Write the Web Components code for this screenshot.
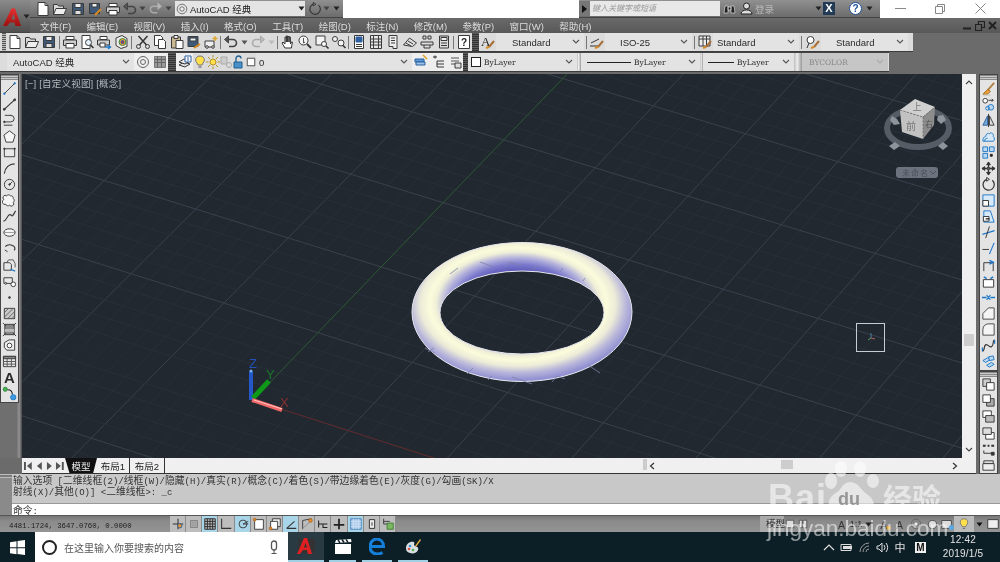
<!DOCTYPE html>
<html lang="zh">
<head>
<meta charset="utf-8">
<title>AutoCAD 经典</title>
<style>
  html, body { margin: 0; width: 1000px; height: 562px; overflow: hidden; background: #6b6b6b; }
  body { position: relative; font-family: "Liberation Sans", "Noto Sans CJK SC", sans-serif; font-size: 10px; display: flex; flex-direction: column; filter: blur(0.35px); }
</style>
</head>
<body>
<cad-header></cad-header>
<cad-toolrow row="1"></cad-toolrow>
<cad-toolrow row="2"></cad-toolrow>
<cad-workspace></cad-workspace>
<cad-tabs></cad-tabs>
<cad-command></cad-command>
<cad-status></cad-status>
<cad-taskbar></cad-taskbar>
<cad-watermark></cad-watermark>

<script>
// small drawing helpers for the 16x16 icons
const L = (d, c = "#3a3a3a", w = 1) => `<path d="${d}" fill="none" stroke="${c}" stroke-width="${w}"/>`;
const F = (d, f = "#fff", c = "#3a3a3a") => `<path d="${d}" fill="${f}" stroke="${c}"/>`;
const C = (x, y, r, f = "none", c = "#3a3a3a") => `<circle cx="${x}" cy="${y}" r="${r}" fill="${f}" stroke="${c}"/>`;
const B = "#1f78c8";
const brush = L("M9 13l5-6", "#a8703a", 2) + L("M6 14l3-1", "#d88a20", 2);

const ICONS = {
  new: F("M3 1.5h7l3 3v10H3z") + L("M10 1.5v3h3"),
  open: F("M1.5 13.5v-10h4l1 1.500h5v2", "#d8d8d8") + F("M1.500 13.500l2.500-6h10.500l-2.500 6z", "#eee"),
  save: F("M2.500 2.500h11v11h-11z", "#3f5a78") + F("M5 2.500h6v4H5z", "#eee") + F("M5 9.500h6v4H5z", "#ddd"),
  saveas: F("M2.500 2.500h10v10h-10z", "#3f5a78") + F("M5 2.500h5v3.500H5z", "#eee") + L("M8 14l6-6", "#d88a20", 2),
  plot: F("M4 2.500h8v3H4z") + F("M1.500 6h13v5.500h-13z", "#ccc") + F("M4 9.500h8v4.500H4z"),
  preview: F("M3 1.500h8v13H3z") + C(9.5, 8.5, 3, "#e8f2fa") + L("M11.500 11l3 3", "#333", 1.6),
  publish: F("M4 2.500h7v3H4z") + F("M1.500 6h12v5h-12z", "#ccc") + F("M4 9h5v4H4z") + L("M9 13h5M12 11l2.500 2-2.500 2", B, 1.4),
  view3d: F("M3 4l6-2.500 5 3v8l-6 2-5-3z", "#eee") + C(9.5, 8, 3.500, "#f2a020", "#3a8a50") + C(9.5, 8, 1.5, "#c03030", "#2060c0"),
  cut: L("M3.500 2l8 9M12.500 2l-8 9", "#333", 1.5) + C(3.5, 12.5, 2) + C(12.5, 12.5, 2),
  copy: F("M2.500 1.500h6l2 2v8h-8z") + F("M6.500 5.500h5l2 2v7h-7z"),
  paste: F("M2.500 3h9v11h-9z", "#c9b890") + F("M5 1.500h4v3H5z", "#eee") + F("M7 6.500h7v8H7z"),
  match: F("M2 2.500h10v10H2z", "#3f5a78") + F("M4 4h6v3H4z", "#eee") + L("M8 14l6-4", "#d88a20", 2),
  block: F("M2 7h9v6H2z", "#eee") + C(4, 13, 1.3, "#fff") + C(10, 13, 1.3, "#fff") + L("M12 2v5M9.500 4.500h5", "#e0a020", 1.3),
  undo: L("M4 5.500h6a3.500 3.500 0 010 7H6", "#444", 1.6) + F("M1.500 5.500l4-3.500v7z", "#555", "#444"),
  redo: L("M12 5.500H6a3.500 3.500 0 000 7h4", "#aaa", 1.6) + F("M14.500 5.500l-4-3.500v7z", "#bbb", "#aaa"),
  pan: F("M5 14l-3-5 1-1 2 2V3h1.300v5-6h1.400v6-5.500h1.400V8V3h1.300v7l1-2h1l-1 6z", "#fff", "#333"),
  zoomr: C(6.5, 6.5, 4.5, "#f4f4f4") + L("M10 10l4 4", "#333", 1.8) + L("M6.500 4v5M8 8l-1.500 1", "#555"),
  zoomw: F("M2 2h9v9H2z", "#f4f4f4") + C(10, 10, 2.5, "#fff") + L("M12 12l2.500 2.500", "#333", 1.6),
  zoomp: C(4, 5, 2.5, "#f4f4f4") + C(10, 9, 3, "#f4f4f4") + L("M12 11.500l2.500 2.500", "#333", 1.6),
  props: F("M3.500 1.500h9v13h-9z") + F("M5 3h6v5H5z", "#2f5f9f", "#2f5f9f") + L("M5 10.500h6M5 12.500h6"),
  design: F("M2.500 1.500h11v13h-11z", "#e8e8e8") + L("M5.500 1.500v13M10.500 1.500v13M2.500 5h11M2.500 8h11M2.500 11h11"),
  palette: F("M4 1.500h8v13H8v-2H4z", "#eee") + L("M6 4h4M6 6.500h4M6 9h4"),
  sheet: F("M1.500 11l6-7 7 5-4 3.500z", "#ddd") + L("M4 9l5 3M6 7l5 3"),
  markup: L("M4 2h3v3H4zM9 2h3v3H9zM2 8h12v3H2z") + L("M5 11v3h6v-3"),
  calc: F("M3.500 2h9v12h-9z", "#ddd") + F("M5 3.500h6v3H5z", "#eee") + L("M5 9h6M5 11.500h6"),
  help: F("M2.500 1.500h11v13h-11z", "#fff") + `<text x="8" y="12" font-size="10" font-weight="bold" text-anchor="middle" fill="#222" font-family="Liberation Sans">?</text>`,
  textst: `<text x="1" y="12" font-size="13" fill="#222" font-family="Liberation Serif">A</text>` + brush,
  dimst: L("M1 12h9M2 9l8-4", "#333") + brush,
  tablest: F("M2 2h11v10H2z", "#eee") + L("M2 5h11M6 2v10M9.500 2v10") + brush,
  mlst: C(5.5, 6, 3.5, "#fff") + L("M4 9l-2 5", "#333") + brush,
  gear: C(8, 8, 2.5, "#eee", "#666") + C(8, 8, 5.5, "none", "#666"),
  wsgrid: F("M2.500 2.500h11v11h-11z", "#999", "#777") + L("M2.500 5.500h11M2.500 8.500h11M5.500 2.500v11M9.500 2.500v11", "#666"),
  layers: F("M2 11l5-3 6 2-5 3z", "#ddd") + F("M2 8l5-3 6 2-5 3z", "#eee") + F("M8 2h6v6H8z", "#fff", "#2f5f9f") + L("M10 4h2M10 6h2", "#2f5f9f"),
  bulb: F("M8 2a4 4 0 013 7l-1 2H6L5 9a4 4 0 013-7z", "#ffe04a", "#777") + L("M6.500 13h3", "#777", 1.4),
  sun: C(8, 8, 3, "#ffe04a", "#b89020") + L("M8 1v2.500M8 12.500V15M1 8h2.500M12.500 8H15M3 3l2 2M11 11l2 2M13 3l-2 2M5 11l-2 2", "#b89020"),
  vpfrz: F("M3 3h6v7H3z", "#ccc", "#aaa") + C(11, 11, 2.5, "#ddd", "#aaa"),
  lock: F("M3 8h8v6H3z", "#4a90c8", "#1f5f8f") + L("M5 8V4.500a2.500 2.500 0 015 0", "#1f5f8f", 1.3),
  sq: F("M3 3h10v10H3z", "#fff", "#222"),
  laymatch: F("M2 5h9v3H2z", "#5c9bd8", "#2f5f9f") + F("M3 8h9v3H3z", "#9cc4ea", "#2f5f9f") + L("M10 1l4 4", "#e0a020", 1.6),
  layprev: L("M3 3h4M5 1.500v3", "#333") + L("M7 7h7M7 10h7M7 13h7") + L("M7 7v6", "#333"),
  laystate: L("M4 4h8M4 7h8M4 10h8", "#555") + F("M8 9h6v5H8z", "#ddd"),
  line: L("M2.500 13.500L13.500 2.500") + C(2.5, 13.5, .8, "#1c6fc0", "#1c6fc0") + C(13.5, 2.5, .8, "#1c6fc0", "#1c6fc0"),
  xline: L("M1.500 14L14.500 2", "#333", 1.2) + C(2.5, 13, 1, "#333") + C(13.5, 3, 1, "#333"),
  pline: L("M10 2.500h-7M9 2.500a4 3.500 0 010 7H2") + L("M2 13h9", "#333") + C(2.5, 9.5, .8, "#333"),
  poly: F("M8 2l6 4.500-2.300 7.500H4.300L2 6.500z", "#f6f6f6"),
  rect: F("M2.500 4h11v8.500h-11z", "#e8e8e8") + C(2.5, 4, .7, "#333") + C(13.5, 4, .7, "#333"),
  arc: L("M2.500 13.500C3 7 8 3 13.500 3", "#333", 1.2),
  circle: C(8, 8, 5.5) + L("M8 8l3-3", "#333") + C(8, 8, .8, "#333"),
  cloud: F("M5 3a2.500 2.500 0 014 0 2.500 2.500 0 013 3 2.500 2.500 0 010 4 2.500 2.500 0 01-4 3 2.500 2.500 0 01-4-1 2.500 2.500 0 01-2-5 2.500 2.500 0 013-4z", "#f6f6f6"),
  spline: L("M1.500 13c4-1 4-7 7-7s1 5 6-4", "#333", 1.1),
  ellipse: `<ellipse cx="8" cy="8" rx="6" ry="4" fill="#f6f6f6" stroke="#333"/>` + L("M2 8h12M8 4v1", "#999"),
  earc: L("M3.500 6A5.500 3.800 0 1113 10", "#333", 1.2) + L("M3 9.500l3 2", "#333"),
  insert: F("M2 5h6l2 2v6H2z", "#e8e8e8") + L("M5 5l2-3h5l2 4v4", "#555") + L("M9 12l5 2", B, 1.4),
  wblock: F("M2 4h9v6H2z", "#e8e8e8") + C(12, 11, 2.5, "#fff") + C(4, 10, 1, "#fff"),
  point: C(8, 8, 1, "#444", "#444"),
  hatch: F("M2.500 2.500h11v11h-11z", "#c8c8c8") + L("M2.500 7l4.500-4.500M2.500 12l9.500-9.500M6 13.500l7.500-7.500M10.500 13.500l3-3", "#666"),
  grad: F("M3 2.500h10v11H3z", "#888") + L("M1 1l3 3M15 1l-3 3M1 15l3-3M15 15l-3-3") + L("M3 9h10", "#bbb", 3),
  region: F("M2.500 5l5-3h6v11H5l-2.500-3z", "#eee") + C(8, 8, 2.5, "#fff"),
  table: F("M1.500 2.500h13v11h-13z", "#e8e8e8") + F("M1.500 2.500h13v2.500h-13z", "#888") + L("M1.500 8h13M1.500 10.800h13M5.500 5v8.500M10 5v8.500", "#555"),
  mtext: `<text x="8" y="14" font-size="16" font-weight="bold" text-anchor="middle" fill="#2a2a2a" font-family="Liberation Sans">A</text>`,
  addsel: C(3.5, 3.5, 2.2, "#4caf50", "#2e8b40") + L("M6 4c4 0 5 2 5 5", "#222", 1.2) + C(12, 12, 2.8, "#3d9ce0", "#1f78c8"),
  erase: L("M14 2L7 10", "#b08040", 2) + F("M7 9l-5 5h5l3-3z", "#e8a040", "#a86a20") + L("M2 15h8", "#c0c0c0"),
  copyobj: C(4.5, 4, 2.500, "#fff") + L("M8 3.500h5l-1.500-1.500M13 3.500l-1.500 1.500", "#333") + C(10.5, 11, 3, "#bcd8f0", B) + C(7, 12, 2, "none", B),
  mirror: F("M7 3v10H2z", "#7aa8d8", "#2f5f9f") + F("M9 3v10h5z", "#ddd") + L("M8 1v14", "#333"),
  offset: F("M2 13c0-4 2-5 3-5 0-3 3-4 4-3 2-2 5 0 4 3 2 1 1.500 5 0 5z", "#d8eaf8", B) + L("M4 13c0-3 1-3 3-3", B),
  array: F("M2 2h5v5H2zM9 2h5v5H9zM2 9h5v5H2z", "#bcd8f0", B) + F("M10 10h2v2h-2z", "#222", "#222"),
  move: L("M8 1.500v13M1.500 8h13", "#333", 1.4) + F("M8 1l2 3H6zM8 15l2-3H6zM1 8l3-2v4zM15 8l-3-2v4z", "#333", "#333") + C(8, 8, 1.5, "#666", "#333"),
  rotate: L("M12 3.500A6 6 0 116 2.500", "#333", 1.3) + L("M6 .5v4l3-2z", "#333"),
  scale: F("M2 2h12v12H2z", "#d8eaf8", B) + F("M2 8h6v6H2z", "#fff", "#333"),
  stretch: F("M3 2h7l4 12H3z", "#d8eaf8", B) + F("M2.500 8h6v5h-6z", "#fff", "#333") + L("M5 10.500h4", "#222", 1.4),
  trim: L("M1.500 10l13-4", B, 1.2) + L("M9 1.500L5 14", "#333"),
  extend: L("M1.500 9h7", "#333", 1) + L("M9 14l5-12", B, 1.2),
  brk: L("M3 5h10v9", "#333") + L("M3 5v9", "#333") + L("M9 2.500l4 2-4 2", B, 1.6),
  brk2: F("M2.500 6h11v8h-11z", "#fff", "#333") + L("M3 3l3 2M13 3l-3 2", B, 1.6),
  join: L("M1 8h5M10 8h5", B, 1.4) + L("M6 5.500l2 2.500-2 2.500M10 5.500l-2 2.500 2 2.500", B, 1.2),
  chamfer: F("M2 14V8l6-6h6v12z", "#f4f4f4", "#444"),
  fillet: F("M2 14V8C2 4 5 2 8 2h6v12z", "#f4f4f4", "#444"),
  blend: L("M1.500 14c3 0 1-7 4-7s3 4 6 2 0-6 3-7", "#333", 1.2) + L("M1.500 10v4M14.500 2v4", B, 1.4),
  explode: F("M2 7l5-3 3 2-5 3z", "#bcd8f0", B) + F("M6 12l5-3 3 2-5 3z", "#bcd8f0", B) + F("M8 3l5-1 1 4-5 1z", "#bcd8f0", B),
  front: F("M2 2h8v8H2z", "#ccc") + F("M6 6h8v8H6z", "#fff"),
  back: F("M6 6h8v8H6z", "#aaa") + F("M2 2h8v8H2z", "#fff"),
  above: F("M2 2h9v7H2z", "#fff") + F("M5 7h9v7H5z", "#bbb"),
  below: F("M5 7h9v7H5z", "#fff") + F("M2 2h9v7H2z", "#ddd"),
  attr: L("M2 4h3M7 4h2M11 4h3", "#333", 2) + L("M3 9v3h9", "#333") + F("M11 11h3v3h-3z", "#333", "#333"),
  m: F("M3 3h10v3H3z", "#ddd") + F("M2 6h12v7H2z", "#eee"),
};

class CadIcon extends HTMLElement {
  connectedCallback() {
    const size = this.getAttribute("size") || 16;
    this.attachShadow({ mode: "open" }).innerHTML = `
      <style>:host { display: flex; align-items: center; justify-content: center; flex: none; } svg { display: block; }</style>
      <svg width="${size}" height="${size}" viewBox="0 0 16 16">${ICONS[this.getAttribute("name")] || ""}</svg>`;
  }
}
customElements.define("cad-icon", CadIcon);

const icon = (n, s) => `<cad-icon name="${n}"${s ? ` size="${s}"` : ""}></cad-icon>`;
const arrow = (c = "#444") => `<svg width="8" height="6" viewBox="0 0 8 6"><path d="M1 1l3 3 3-3" fill="none" stroke="${c}" stroke-width="1.100"/></svg>`;
const tri = (c = "#333") => `<svg width="7" height="5" viewBox="0 0 7 5"><path d="M0.500 .5h6L3.500 4.500z" fill="${c}"/></svg>`;

/* the logo and the two dark rows on top */
class CadHeader extends HTMLElement {
  connectedCallback() {
    const menus = ["文件(F)", "编辑(E)", "视图(V)", "插入(I)", "格式(O)", "工具(T)", "绘图(D)", "标注(N)", "修改(M)", "参数(P)", "窗口(W)", "帮助(H)"];
    const quick = ["new", "open", "save", "saveas", "plot"];
    this.attachShadow({ mode: "open" }).innerHTML = `
      <style>
        :host { display: flex; height: 33px; flex: none; background: #5e5e5e; color: #e6e6e6; }
        .logo { width: 30px; flex: none; display: flex; align-items: center; gap: 1px; padding-left: 2px; box-sizing: border-box; background: linear-gradient(#8a8a8a, #4e4e4e); }
        .col { flex: 1; min-width: 0; display: flex; flex-direction: column; }
        .title { height: 18px; display: flex; align-items: center; flex: none; background: linear-gradient(#909090, #6c6c6c); border-bottom: 1px solid #444; box-sizing: border-box; }
        .quick { display: flex; width: 145px; padding-left: 4px; box-sizing: border-box; align-items: center; }
        .quick cad-icon { width: 17.500px; }
        .combo { width: 130px; height: 15px; background: #e4e4e4; display: flex; align-items: center; color: #222; font-size: 9.500px; box-sizing: border-box; flex: none; }
        .combo span { flex: 1; padding-left: 1px; }
        .blank { background: #fff; height: 18px; flex: none; }
        .search { width: 130px; height: 15px; background: #e8e8e8; color: #999; font-size: 8px; font-style: italic; line-height: 15px; padding-left: 2px; box-sizing: border-box; flex: none; }
        .pick { width: 11px; height: 15px; background: #777; display: flex; align-items: center; justify-content: center; flex: none; }
        .right { flex: 1; display: flex; align-items: center; height: 17px; }
        .win { width: 120px; height: 18px; background: #fff; display: flex; flex: none; color: #888; }
        .win div { flex: 1; display: flex; align-items: center; justify-content: center; }
        .menu { flex: 1; display: flex; align-items: center; padding-left: 10px; gap: 15.400px; font-size: 9.500px; background: linear-gradient(#6a6a6a, #585858); position: relative; color: #dcdcdc; }
        .mdi { margin-left: auto; display: flex; gap: 3px; padding-right: 3px; align-items: center; }
      </style>
      <div class="logo">
        <svg width="20" height="20" viewBox="0 0 20 20"><defs><linearGradient id="r" x1="0" y1="0" x2="0" y2="1"><stop offset="0" stop-color="#e83030"/><stop offset="1" stop-color="#9a1010"/></linearGradient></defs><path fill-rule="evenodd" d="M1 19L9.500 1.500h3.500L19 19h-5.500l-1-3.500H8L5 19zM11.500 7L9.500 12.500h3.500z" fill="url(#r)"/></svg>
        ${tri("#222")}
      </div>
      <div class="col">
        <div class="title">
          <div class="quick">${quick.map((n) => icon(n)).join("")}${icon("undo")}<span style="width:8px;display:flex">${tri("#444")}</span>${icon("redo", 15)}<span style="display:flex">${tri("#444")}</span></div>
          <div class="combo">${icon("gear", 14)}<span>AutoCAD 经典</span>${tri("#222")}</div>
          <span style="width:3px"></span>${icon("rotate", 14)}<span style="display:flex;margin:0 3px 0 1px">${tri("#444")}</span>
          <span style="display:flex;margin-right:3px">${tri("#222")}</span>
          <div class="blank" style="width:236px"></div>
          <div class="pick">${`<svg width="5" height="8" viewBox="0 0 5 8"><path d="M0 0l5 4-5 4z" fill="#111"/></svg>`}</div>
          <div class="search">键入关键字或短语</div>
          <div class="right">
            <span style="width:17px;margin-left:1px;display:flex;justify-content:center"><svg width="13" height="12" viewBox="0 0 13 12"><path d="M1 10l1-7h3v7zM8 10V3h3l1 7zM5 4h3v3H5z" fill="#222" stroke="#eee" stroke-width=".6"/></svg></span>
            <span style="width:17px;display:flex;justify-content:center"><svg width="13" height="13" viewBox="0 0 13 13"><circle cx="6.500" cy="4" r="3" fill="#ddd" stroke="#222"/><path d="M1 12c0-3 3-4 5.500-4S12 9 12 12z" fill="#ddd" stroke="#222"/></svg></span>
            <span style="color:#bbb;font-size:9.500px;width:60px">登录</span>
            <span style="display:flex;width:8px">${tri("#222")}</span>
            <span style="width:12px;height:13px;background:#223a55;color:#fff;font-size:11px;font-weight:bold;text-align:center;line-height:13px;margin-right:14px">X</span>
            <span style="width:13px;height:13px;border-radius:50%;background:#fff;color:#1c4f9c;border:1px solid #1c4f9c;box-sizing:border-box;font-size:10px;font-weight:bold;text-align:center;line-height:11px;margin-right:4px">?</span>
            <span style="display:flex">${tri("#222")}</span>
          </div>
          <div class="win">
            <div><svg width="11" height="1"><path d="M0 .5h11" stroke="#888"/></svg></div>
            <div><svg width="10" height="10"><path d="M.5 2.500h7v7h-7zM2.500 2.500v-2h7v7h-2" fill="none" stroke="#888"/></svg></div>
            <div><svg width="11" height="11"><path d="M.5 .5l10 10M10.500 .5l-10 10" stroke="#888"/></svg></div>
          </div>
        </div>
        <div class="menu">
          ${menus.map((m) => `<span>${m}</span>`).join("")}
          <div class="mdi">
            <svg width="9" height="9"><path d="M0 7.500h8" stroke="#222" stroke-width="2"/></svg>
            <svg width="10" height="10"><path d="M.5 3.500h6v6h-6zM3.500 3v-2.500h6v6H7" fill="none" stroke="#222" stroke-width="1.200"/></svg>
            <svg width="9" height="9"><path d="M1 1l7 7M8 1L1 8" stroke="#222" stroke-width="2"/></svg>
          </div>
        </div>
      </div>`;
  }
}
customElements.define("cad-header", CadHeader);

const ROWS = {
  1: [
    { pad: 2 }, { grip: 4, x: 0 },
    "new", "open", "save", { sep: 4 }, "plot", "preview", "publish", "view3d", { sep: 5 },
    "cut", "copy", "paste", "match", "block", { sep: 3 },
    "undo", { tri: 10 }, "redo", { tri: 10, light: 1 }, { sep: 3 },
    "pan", "zoomr", "zoomw", "zoomp", { sep: 3 },
    "props", "design", "palette", "sheet", "markup", "calc", { sep: 3 }, "help",
    { gap: 7 },
    "textst", { combo: "Standard", w: 88, pl: 16 }, { sep: 4 },
    "dimst", { combo: "ISO-25", w: 87, pl: 15 }, { sep: 4 },
    "tablest", { combo: "Standard", w: 86, pl: 4 }, { sep: 5 },
    "mlst", { combo: "Standard", w: 87, pl: 15, end: 1 },
  ],
  2: [
    { pad: 7 },
    { combo: "AutoCAD 经典", w: 127, pl: 6 }, { ic: "gear", bg: 1 }, { ic: "wsgrid", bg: 1 },
    { gap: 8 },
    { ic: "layers", bg: 1 }, { ic: "bulb", w: 14 }, { ic: "sun", w: 12 }, { ic: "vpfrz", w: 14 }, { ic: "lock", w: 12 }, { ic: "sq", w: 11, s: 12 },
    { combo: "0", w: 156, pl: 3, ph: 1 },
    { ic: "laymatch", bg: 1 }, { ic: "layprev", bg: 1 }, { ic: "laystate", bg: 1 },
    { gap: 5 },
    { combo: "ByLayer", w: 109, serif: 1, swatch: 1 }, { gap: 4, thin: 1 },
    { combo: "ByLayer", w: 119, serif: 1, ln: 44, pl: 6 }, { gap: 3, thin: 1 },
    { combo: "ByLayer", w: 91, serif: 1, ln: 26, pl: 5 }, { gap: 8, thin: 1 },
    { combo: "BYCOLOR", w: 86, serif: 1, off: 1, pl: 7, end: 1 },
  ],
};

class CadToolrow extends HTMLElement {
  connectedCallback() {
    const row = this.getAttribute("row");
    const cells = ROWS[row].map((it) => {
      if (typeof it === "string") return `<div class="cell" style="width:17px">${icon(it)}</div>`;
      if (it.pad) return `<div style="width:${it.pad}px;flex:none"></div>`;
      if (it.grip) return `<div class="grip" style="width:${it.grip}px;margin-right:${it.x || 0}px"></div>`;
      if (it.sep) return `<div class="sep" style="width:${it.sep}px"></div>`;
      if (it.gap) return `<div class="${it.thin ? "thin" : "gap"}" style="width:${it.gap}px"></div>`;
      if (it.tri) return `<div class="cell" style="width:${it.tri}px">${tri(it.light ? "#bbb" : "#555")}</div>`;
      if (it.ic) return `<div class="cell${it.bg ? " lite" : ""}" style="width:${it.w || 17}px">${icon(it.ic, it.s)}</div>`;
      const cls = ["combo", it.serif && "serif", it.off && "off", it.end && "end"].filter(Boolean).join(" ");
      return `<div class="${cls}" style="width:${it.w}px;padding-left:${it.pl ?? 3}px">
        ${it.swatch ? `<i class="sw"></i>` : ""}${it.ln ? `<i class="ln" style="width:${it.ln}px"></i>` : ""}
        <span>${it.combo}</span>${it.ph ? `<em style="flex:1"></em>` : ""}<b>${arrow(it.off ? "#aaa" : "#555")}</b></div>`;
    }).join("");
    this.attachShadow({ mode: "open" }).innerHTML = `
      <style>
        :host { display: flex; height: 18px; flex: none; background: #dcdcdc; margin-top: ${row == 1 ? 0 : 1}px; margin-bottom: ${row == 1 ? 1 : 3}px; width: ${row == 1 ? 913 : 889}px; box-sizing: border-box; box-shadow: 0 1px 0 #3c3c3c, 0 -1px 0 #444; align-items: stretch; }
        .row { display: flex; align-items: stretch; height: 18px; }
        .cell { display: flex; align-items: center; justify-content: center; flex: none; }
        .lite { background: #eeeeee; }
        .grip { flex: none; background: repeating-linear-gradient(#555 0 1px, #bbb 1px 2px); }
        .sep { flex: none; background: linear-gradient(#777, #777) center/1px 13px no-repeat; }
        .gap { flex: none; background: repeating-linear-gradient(#5a5a5a 0 1px, #333 1px 2px); }
        .thin { flex: none; background: linear-gradient(90deg, #bbb, #eee 40%, #999); }
        .combo { flex: none; box-sizing: border-box; display: flex; align-items: center; background: #e3e3e3; color: #2a2a2a; font-size: 9.500px; position: relative; white-space: nowrap; }
        .combo b { position: absolute; right: 4px; top: 6px; display: flex; }
        .serif { font-family: "DejaVu Serif", "Liberation Serif", serif; font-size: 7.500px; }
        .off { background: #c6c6c6; color: #888; }
        .sw { width: 8px; height: 8px; border: 1px solid #222; background: #fff; margin-right: 3px; }
        .ln { height: 1px; background: #222; margin-right: 3px; flex: none; }
      </style>
      <div class="row">${cells}</div>`;
  }
}
customElements.define("cad-toolrow", CadToolrow);

/* a vertical dock of icons */
class CadDock extends HTMLElement {
  connectedCallback() {
    const groups = this.getAttribute("icons").split("|").map((g) => g.trim().split(/\s+/));
    this.attachShadow({ mode: "open" }).innerHTML = `
      <style>
        :host { display: flex; flex-direction: column; gap: 2px; flex: none; width: 17px; }
        .bar { background: #e4e4e4; box-shadow: 0 0 0 1px #444; display: flex; flex-direction: column; }
        .grip { height: 5px; background: repeating-linear-gradient(#8a8a8a 0 1px, #c8c8c8 1px 2px); }
        cad-icon { height: 16.100px; }
      </style>
      ${groups.map((g) => `<div class="bar"><div class="grip"></div>${g.map((n) => icon(n, 15)).join("")}</div>`).join("")}`;
  }
}
customElements.define("cad-dock", CadDock);

/* 3D canvas: the grid, torus, UCS icon and view cube are all drawn in page coordinates */
class CadViewport extends HTMLElement {
  connectedCallback() {
    const O = [253, 400], U = [1, 0.319], V = [1, -1.04];
    const P = (u, v) => {
      const w = 1 + v * 0.00018 - u * 0.00004;
      const dx = u * U[0] + v * V[0], dy = u * U[1] + v * V[1];
      return [O[0] + dx / w, O[1] + dy / w];
    };
    let grid = "";
    const line = (a, b, c) => { grid += `<line x1="${a[0].toFixed(1)}" y1="${a[1].toFixed(1)}" x2="${b[0].toFixed(1)}" y2="${b[1].toFixed(1)}" stroke="${c}"/>`; };
    for (let i = -60; i <= 90; i++) {
      const major = i % 5 === 0;
      if (i !== 0) {
        line(P(-1600, i * 13.100), P(2000, i * 13.100), major ? "#39414d" : "#272f39");
        line(P(i * 19, -1000), P(i * 19, 1400), major ? "#39414d" : "#272f39");
      }
    }
    const iso = [
      "M458 268l-8 6", "M505 267l6-5 11 4", "M533 270l4-5", "M560 272l3-4", "M583 281l2-3", "M480 262l14 5",
      "M428 352l6-4", "M467 374l6-6", "M488 380l4-4", "M512 377l20 7", "M552 382l5-6 8 3", "M588 365l12 8", "M425 348l10 5",
    ].map((d) => `<path d="${d}" fill="none" stroke="#7d80a8" stroke-width=".8"/>`).join("");
    this.attachShadow({ mode: "open" }).innerHTML = `
      <style>
        :host { display: block; position: relative; flex: none; width: 940px; height: 384px; background: #212830; overflow: hidden; }
        svg { position: absolute; left: 0; top: 0; display: block; }
        .label { position: absolute; left: 3px; top: 2px; color: #b4b8bc; font-size: 9.500px; letter-spacing: .2px; }
      </style>
      <svg width="940" height="384" viewBox="22 74 940 384" font-family="Liberation Sans, Noto Sans CJK SC, sans-serif">
        <defs>
          <radialGradient id="torus" gradientUnits="userSpaceOnUse" cx="0" cy="0" r="1.500" gradientTransform="translate(518 304) scale(88 56)">
            <stop offset=".39" stop-color="#5d58b8"/>
            <stop offset=".47" stop-color="#7a78cc"/>
            <stop offset=".55" stop-color="#b4b2dc"/>
            <stop offset=".62" stop-color="#f0f0d8"/>
            <stop offset=".67" stop-color="#fbfbdc"/>
            <stop offset=".74" stop-color="#ecebd8"/>
            <stop offset=".82" stop-color="#b8b6da"/>
            <stop offset=".9" stop-color="#9492d2"/>
            <stop offset="1" stop-color="#8886cc"/>
          </radialGradient>
        </defs>
        <g stroke-width="1">${grid}</g>
        <line x1="253" y1="400" x2="570" y2="71" stroke="#2c5a32"/>
        <line x1="253" y1="400" x2="440" y2="460" stroke="#642c2e"/>

        <path fill-rule="evenodd" fill="url(#torus)" stroke="#e8e8f0" stroke-width="1"
          d="M412 312a110 69.500 0 10220 0a110 69.500 0 10-220 0z M440 312.500a82 41.500 0 10164 0a82 41.500 0 10-164 0z"/>
        ${iso}

        <!-- ucs icon -->
        <line x1="251" y1="400" x2="251" y2="371" stroke="#2458c8" stroke-width="4"/>
        <circle cx="251" cy="371" r="1.500" fill="#7ab0f0"/>
        <line x1="253" y1="398" x2="269" y2="381" stroke="#0e9a18" stroke-width="5"/>
        <line x1="252" y1="400" x2="282" y2="410" stroke="#f06868" stroke-width="4"/>
        <line x1="254" y1="400" x2="282" y2="409" stroke="#ffc8c0" stroke-width="1"/>
        <text x="249" y="368" font-size="13" fill="#2050b8">Z</text>
        <text x="266" y="379" font-size="13" fill="#1a7a28">Y</text>
        <text x="280" y="407" font-size="13" fill="#8a3030">X</text>

        <!-- view cube -->
        <ellipse cx="918" cy="128" rx="31" ry="19" fill="none" stroke="#565c66" stroke-width="6"/>
        <g fill="#8e949c">
          <path d="M892 116l5 3 3 5-6 1-4-5zM938 116l5-1 3 5-5 4-4-4zM889 146l6-4 5 4-6 4zM938 146l5-4 5 4-5 4z"/>
        </g>
        <path d="M915 99l20 8-12 10-23-7z" fill="#d0d0d0"/>
        <path d="M900 110l23 7v22l-21-7z" fill="#c2c2c2"/>
        <path d="M923 117l12-10-1 18-11 14z" fill="#8c8c8c"/>
        <path d="M900 110l23 7 12-10M923 117v22" fill="none" stroke="#6a6a6a" stroke-dasharray="2 1.500" stroke-width=".8"/>
        <text x="917" y="110" font-size="9" fill="#777" text-anchor="middle">上</text>
        <text x="911" y="130" font-size="10" fill="#777" text-anchor="middle">前</text>
        <text x="929" y="127" font-size="8" fill="#555" text-anchor="middle">右</text>
        <rect x="896" y="167" width="42" height="11" rx="3" fill="#6c727e"/>
        <text x="902" y="175.500" font-size="8" fill="#4c515a" letter-spacing="1">未命名</text>
        <path d="M930 171l3 3 3-3" fill="none" stroke="#4c515a"/>

        <!-- cursor -->
        <rect x="856.500" y="323.500" width="28" height="28" fill="none" stroke="#c8ccd0"/>
        <path d="M871 333v5" stroke="#4a80a0"/><path d="M871 338l-3 2" stroke="#5a9a5a"/><path d="M871 338l4 1" stroke="#b06060"/>
      </svg>
      <div class="label">[−] [自定义视图] [概念]</div>`;
  }
}
customElements.define("cad-viewport", CadViewport);

class CadWorkspace extends HTMLElement {
  connectedCallback() {
    this.attachShadow({ mode: "open" }).innerHTML = `
      <style>
        :host { display: flex; height: 384px; flex: none; background: #6b6b6b; }
        .left { width: 22px; flex: none; padding: 1px 0 0 1px; box-sizing: border-box; background: linear-gradient(90deg, #6f6f6f 17px, #8a8a8a 18px, #8a8a8a 20px, #555 21px); }
        .vs { width: 14px; flex: none; background: #f0f0f0; display: flex; flex-direction: column; align-items: center; justify-content: space-between; padding: 5px 0; box-sizing: border-box; position: relative; }
        .thumb { position: absolute; left: 2px; top: 260px; width: 10px; height: 12px; background: #cdcdcd; }
        .right { width: 24px; flex: none; padding: 1px 0 0 4px; box-sizing: border-box; }
      </style>
      <div class="left"><cad-dock icons="line xline pline poly rect arc circle cloud spline ellipse earc insert wblock point hatch grad region table mtext addsel"></cad-dock></div>
      <cad-viewport></cad-viewport>
      <div class="vs">
        ${arrow("#444").replace('M1 1l3 3 3-3', 'M1 5l3-3 3 3')}
        <div class="thumb"></div>
        ${arrow("#444")}
      </div>
      <div class="right"><cad-dock icons="erase copyobj mirror offset array move rotate scale stretch trim extend brk brk2 join chamfer fillet blend explode | front back above below attr m"></cad-dock></div>`;
  }
}
customElements.define("cad-workspace", CadWorkspace);

class CadTabs extends HTMLElement {
  connectedCallback() {
    const nav = (d) => `<svg width="10" height="10" viewBox="0 0 10 10"><path d="${d}" fill="#555"/></svg>`;
    this.attachShadow({ mode: "open" }).innerHTML = `
      <style>
        :host { display: flex; height: 15px; flex: none; align-items: stretch; font-size: 9.500px; margin-left: 22px; width: 954px; background: #f0f0f0; color: #222; box-shadow: 0 1px 0 #333; position: relative; }
        .nav { display: flex; align-items: center; gap: 1px; width: 43px; flex: none; padding-left: 1px; box-sizing: border-box; }
        .tab { display: flex; align-items: center; justify-content: center; flex: none; width: 32px; }
        .on { background: #111; color: #eee; clip-path: polygon(0 0, 100% 0, 88% 100%, 14% 100%); }
        .skew { border-right: 1px solid #333; }
        .fill { flex: 1; }
        .h { width: 333px; flex: none; display: flex; align-items: center; position: relative; }
        .g { position: absolute; left: 0; top: 1px; width: 4px; height: 11px; background: #ccc; }
        .t { position: absolute; left: 138px; top: 2px; width: 12px; height: 9px; background: #cdcdcd; }
      </style>
      <div class="nav">${nav("M1 1h2v8H1zM9 1v8L4 5z")}${nav("M8 1v8L3 5z")}${nav("M2 1v8l5-4z")}${nav("M9 1H7v8h2zM1 1v8l5-4z")}</div>
      <div class="tab on">模型</div>
      <div class="tab skew">布局1</div>
      <div class="tab skew" style="width:34px">布局2</div>
      <div class="fill"></div>
      <div class="h"><div class="g"></div><span style="position:absolute;left:6px;top:3px"><svg width="6" height="8"><path d="M5 1L1.500 4 5 7" fill="none" stroke="#333" stroke-width="1.200"/></svg></span><div class="t"></div><span style="position:absolute;right:18px;top:3px"><svg width="6" height="8"><path d="M1 1l3.500 3L1 7" fill="none" stroke="#333" stroke-width="1.200"/></svg></span></div>`;
  }
}
customElements.define("cad-tabs", CadTabs);

class CadCommand extends HTMLElement {
  connectedCallback() {
    const l = (s) => `<span class="l">${s}</span>`;
    this.attachShadow({ mode: "open" }).innerHTML = `
      <style>
        :host { display: flex; height: 42px; flex: none; margin-top: 1px; background: #7a7a7a; font-family: "Noto Sans CJK SC", sans-serif; font-size: 9.800px; color: #333; }
        .grip { width: 12px; flex: none; background: linear-gradient(#bbb 0 1px, #7a7a7a 1px 3px, #bbb 3px 4px, #8a8a8a 4px); }
        .body { flex: 1; display: flex; flex-direction: column; }
        .hist { flex: 1; background: #c8c8c8; padding: 1px 0 0 1px; border-bottom: 1px solid #999; white-space: nowrap; }
        .hist div { height: 11px; line-height: 11px; }
        .input { height: 12px; background: #fff; line-height: 12px; padding-left: 1px; flex: none; }
        .l { font-family: "Liberation Mono", monospace; font-size: 9px; }
      </style>
      <div class="grip"></div>
      <div class="body">
        <div class="hist">
          <div>输入选项${l(" [")}二维线框${l("(2)/")}线框${l("(W)/")}隐藏${l("(H)/")}真实${l("(R)/")}概念${l("(C)/")}着色${l("(S)/")}带边缘着色${l("(E)/")}灰度${l("(G)/")}勾画${l("(SK)/X")}</div>
          <div>射线${l("(X)/")}其他${l("(O)] <")}二维线框${l(">: _c")}</div>
        </div>
        <div class="input">命令${l(":")}</div>
      </div>`;
  }
}
customElements.define("cad-command", CadCommand);

class CadStatus extends HTMLElement {
  connectedCallback() {
    const left = [
      ["snap"], ["gridd"], ["gridon", 1], ["ortho"], ["polar", 1], ["osn"], ["osn3"], ["otrack", 1], ["ducs"], ["dyn"], ["lwt"], ["tp", 1], ["qp"], ["sc"],
    ];
    const draw = {
      snap: L("M8 2v12M2 8h12", "#333", 1.2) + C(10, 10, 2.5, "#e89030", "#2060a0"),
      gridd: L("M4 4h8v8H4z", "#777") + L("M6 4v8M8 4v8M10 4v8M4 6h8M4 8h8M4 10h8", "#999"),
      gridon: F("M2 2h12v12H2z", "#bbb", "#222") + L("M5 2v12M8 2v12M11 2v12M2 5h12M2 8h12M2 11h12", "#222"),
      ortho: L("M3 2v11h11", "#333", 1.2),
      polar: C(8, 8, 4.5, "none", "#333") + L("M8 8l6-3M8 8h6", "#333"),
      osn: F("M3 3h10v11H3z", "#fff", "#333") + C(3, 3, 1.5, "#e89030", "#b06010"),
      osn3: F("M5 2h9v9H5z", "#eee", "#333") + F("M3 5h8v9H3z", "#fff", "#333") + C(3, 13, 1.5, "#e89030", "#b06010"),
      otrack: L("M3 13L12 5M3 13h11", "#333", 1.2),
      ducs: L("M3 14V4l10-2", "#333") + L("M3 13L13 4", "#888") + C(12, 4, 2, "#e89030", "#b06010"),
      dyn: L("M3 4v8M3 8h10M8 8v4h5", "#222", 1.2),
      lwt: L("M8 2v12M2 9h12", "#222", 2),
      tp: F("M2 2h12v12H2z", "#a8c8e8", "#3a78b0") + L("M2 5h12M2 8h12M2 11h12M5 2v12M8 2v12M11 2v12", "#cfe2f4"),
      qp: F("M5 3h6v10H5z", "#eee", "#222") + L("M8 6v4", "#222"),
      sc: L("M3 2v6h4M3 5h7", "#333") + F("M7 7h7v7H7z", "#7cb860", "#3a7a30"),
    };
    const tray = (s, w = 16, x = "") => `<span style="width:${w}px;display:flex;justify-content:center;${x}">${s}</span>`;
    const sv = (n, s = 14) => `<svg width="${s}" height="${s}" viewBox="0 0 16 16">${n}</svg>`;
    this.attachShadow({ mode: "open" }).innerHTML = `
      <style>
        :host { display: flex; height: 16px; flex: none; align-items: center; background: linear-gradient(#777, #8a8a8a 30%, #949494); color: #2b2b2b; font-size: 8.500px; box-shadow: 0 -1px 0 #555; }
        .coord { width: 170px; flex: none; padding: 3px 0 0 9px; box-sizing: border-box; font-family: "Liberation Mono", monospace; font-size: 7.300px; color: #222; }
        .btn { width: 16.150px; height: 16px; flex: none; display: flex; align-items: center; justify-content: center; background: #bdbdbd; box-shadow: inset -1px 0 0 #8a8a8a; }
        .btn.on { background: #a9d5e8; }
        .sp { flex: 1; }
        .r { display: flex; align-items: center; height: 16px; flex: none; width: 240px; }
      </style>
      <div class="coord">4481.1724, 3647.0760, 0.0000</div>
      ${left.map(([n, on]) => `<div class="btn${on ? " on" : ""}">${sv(draw[n])}</div>`).join("")}
      <div class="sp"></div>
      <div class="r">
        <span style="width:24px;padding-left:6px;box-sizing:border-box;font-size:9.500px;background:#aaa;height:16px;line-height:16px;white-space:nowrap">模型</span>
        ${tray(sv(F("M3 3h10v10H3z", "#ddd", "#444"), 12), 14)}${tray(sv(F("M3 3h4v10H3zM8 3h5v10H8z", "#ddd", "#444"), 12), 14)}
        <span style="width:10px"></span><span style="width:16px"></span>
        ${tray(sv(`<text x="8" y="13" font-size="13" text-anchor="middle" fill="#333" font-family="Liberation Sans">A</text>`, 13), 14, "margin-left:2px")}
        <span style="width:18px;text-align:center;font-size:9px">1:1</span>
        ${tray(tri("#222"), 10)}
        <span style="width:4px"></span>
        ${tray(sv(`<text x="7" y="13" font-size="13" text-anchor="middle" fill="#333" font-family="Liberation Sans">A</text>` + C(13, 12, 2, "#f0b030", "#f0b030"), 13), 17)}
        ${tray(sv(`<text x="8" y="13" font-size="13" text-anchor="middle" fill="#333" font-family="Liberation Sans">A</text>`, 13), 16)}
        ${tray(sv(ICONS.gear, 14), 20)}
        ${tray(sv(C(8, 8, 5, "#ddd", "#444"), 13), 16)}
        ${tray(sv(F("M2 4h11v9H2z", "#ddd", "#444") + C(13, 12, 2.5, "#5ba8e0", "#5ba8e0"), 14), 16)}
        <span style="width:22px;height:16px;background:#bbb;display:flex;justify-content:center;align-items:center">${sv(ICONS.bulb, 14)}</span>
        ${tray(tri("#111"), 13)}
        ${tray(sv(F("M2 3h12v10H2z", "#eee", "#333"), 14), 16)}
      </div>`;
  }
}
customElements.define("cad-status", CadStatus);

class CadTaskbar extends HTMLElement {
  connectedCallback() {
    this.attachShadow({ mode: "open" }).innerHTML = `
      <style>
        :host { display: flex; height: 30px; flex: none; background: #0d1f26; color: #e4e4e4; align-items: stretch; font-size: 10px; }
        .start { width: 35px; flex: none; display: flex; align-items: center; justify-content: center; }
        .search { width: 253px; flex: none; background: #fff; display: flex; align-items: center; color: #555; padding: 0 9px 0 7px; box-sizing: border-box; }
        .ring { width: 11px; height: 11px; border: 2px solid #222; border-radius: 50%; flex: none; margin-right: 7px; }
        .app { width: 36px; flex: none; display: flex; align-items: center; justify-content: center; box-sizing: border-box; border-bottom: 2px solid #9fd0e4; }
        .app.on { background: #2a3a42; }
        .tray { margin-left: auto; display: flex; align-items: center; padding-right: 12px; height: 30px; }
        .tray > span { display: flex; justify-content: center; align-items: center; flex: none; }
        .clock { width: 50px; text-align: center; line-height: 14px; font-size: 10px; margin-left: 9px; letter-spacing: .2px; }
      </style>
      <div class="start"><svg width="15" height="15" viewBox="0 0 15 15"><path d="M0 2.200l6.500-1v6H0zM7.500 1l7.500-1v7.200H7.500zM0 8.200h6.500v6l-6.500-1zM7.500 8.200H15V15l-7.500-1z" fill="#fff"/></svg></div>
      <div class="search">
        <div class="ring"></div><span style="flex:1">在这里输入你要搜索的内容</span>
        <svg width="10" height="15" viewBox="0 0 10 15"><rect x="2.500" y="1" width="5" height="9" rx="2.500" fill="#fff" stroke="#555" stroke-width="1.300"/><path d="M5 10v3M2.500 13.500h5" stroke="#555"/></svg>
      </div>
      <div class="app on"><svg width="22" height="20" viewBox="0 0 22 20"><path d="M3 3h17v14H3z" fill="#333"/><path fill-rule="evenodd" d="M2 18L9 2h3l5 16h-4l-1-4H8l-3 4zM10.500 7L9 11.500h3z" fill="#e02020"/></svg></div>
      <div class="app" style="margin-left:5px;width:27px"><svg width="18" height="17" viewBox="0 0 18 17"><path d="M1 6h16v10H1z" fill="#fff"/><path d="M1 5l1-3 15-1 .5 3z" fill="#fff"/><path d="M4 1.800l2 3M8 1.500l2 3M12 1.300l2 3" stroke="#0d1f26" stroke-width="1.500"/></svg></div>
      <div class="app" style="margin-left:6px;width:30px"><svg width="16" height="17" viewBox="0 0 16 17"><path d="M2 8.500h12.500C14.500 3.500 11 1 7.500 1 4 1 1 4.500 1 9c0 4.500 3.500 7 7 7 2 0 4-.5 5.500-1.500" fill="none" stroke="#1480dc" stroke-width="3"/></svg></div>
      <div class="app" style="margin-left:6px;width:30px"><svg width="18" height="18" viewBox="0 0 18 18"><path d="M2 11c0-4 4-7 8-6 1 2-1 3 1 4s4 1 3 4c-1 3-5 4-8 3s-4-2-4-5z" fill="#d8e0e4"/><circle cx="6" cy="9" r="1.300" fill="#3a90d0"/><circle cx="5" cy="12" r="1.300" fill="#e05040"/><circle cx="9" cy="13" r="1.300" fill="#58b050"/><path d="M11 9l5-7 1 1-5 7z" fill="#e8b040"/></svg></div>
      <div class="tray">
        <span style="width:18px"><svg width="12" height="7"><path d="M1 6l5-5 5 5" fill="none" stroke="#ddd" stroke-width="1.200"/></svg></span>
        <span style="width:18px"><svg width="14" height="9"><path d="M1 1.500h10v6H1z" fill="none" stroke="#ddd"/><path d="M3 3h9v3H3z" fill="#ddd"/></svg></span>
        <span style="width:18px"><svg width="13" height="11"><path d="M1 10a9 9 0 019-9M4 10a6 6 0 016-6M7 10a3 3 0 013-3" fill="none" stroke="#999"/></svg></span>
        <span style="width:17px"><svg width="13" height="11"><path d="M1 4h2l3-3v9L3 7H1z" fill="none" stroke="#ddd"/><path d="M8 3a4 4 0 010 5M10 1a7 7 0 010 9" fill="none" stroke="#ddd"/></svg></span>
        <span style="width:18px;font-size:11px">中</span>
        <span style="width:11px;height:11px;background:#f0f0f0;color:#111;font-size:10px;font-weight:bold;margin-left:6px;margin-right:3px">M</span>
        <div class="clock"><div>12:42</div><div>2019/1/5</div></div>
      </div>`;
  }
}
customElements.define("cad-taskbar", CadTaskbar);

/* stock photo watermark, it sits over everything */
class CadWatermark extends HTMLElement {
  connectedCallback() {
    this.attachShadow({ mode: "open" }).innerHTML = `
      <style>
        :host { position: absolute; left: 760px; top: 455px; width: 200px; height: 95px; color: rgba(255,255,255,.55); pointer-events: none; }
        div, svg { position: absolute; }
        .bai { left: 8px; top: 22px; font: bold 36px "Liberation Sans", sans-serif; letter-spacing: 1px; }
        .jy { left: 123px; top: 24px; font: bold 29px "Noto Sans CJK SC", sans-serif; line-height: 36px; }
        .url { left: 7px; top: 61px; font: 22.500px "Liberation Sans", sans-serif; white-space: nowrap; }
        .du { left: 78px; top: 34px; font: bold 18px "Liberation Sans", sans-serif; color: rgba(130,130,130,.8); }
      </style>
      <svg width="200" height="95" viewBox="0 0 200 95" style="left:0;top:0" fill="rgba(255,255,255,.55)">
        <ellipse cx="71" cy="26" rx="6" ry="8"/><ellipse cx="81" cy="14" rx="6" ry="8"/><ellipse cx="100" cy="14" rx="6" ry="8"/><ellipse cx="113" cy="26" rx="6" ry="7"/>
        <path d="M90 27c9 0 11 9 18 13 8 5 8 17-2 19-8 1-13-1-19 0-10 2-20-2-18-13 2-7 9-8 12-13 2-3 5-6 9-6z"/>
      </svg>
      <div class="bai">Bai</div>
      <div class="du">du</div>
      <div class="jy">经验</div>
      <div class="url">jingyan.baidu.com</div>`;
  }
}
customElements.define("cad-watermark", CadWatermark);
</script>
</body>
</html>
